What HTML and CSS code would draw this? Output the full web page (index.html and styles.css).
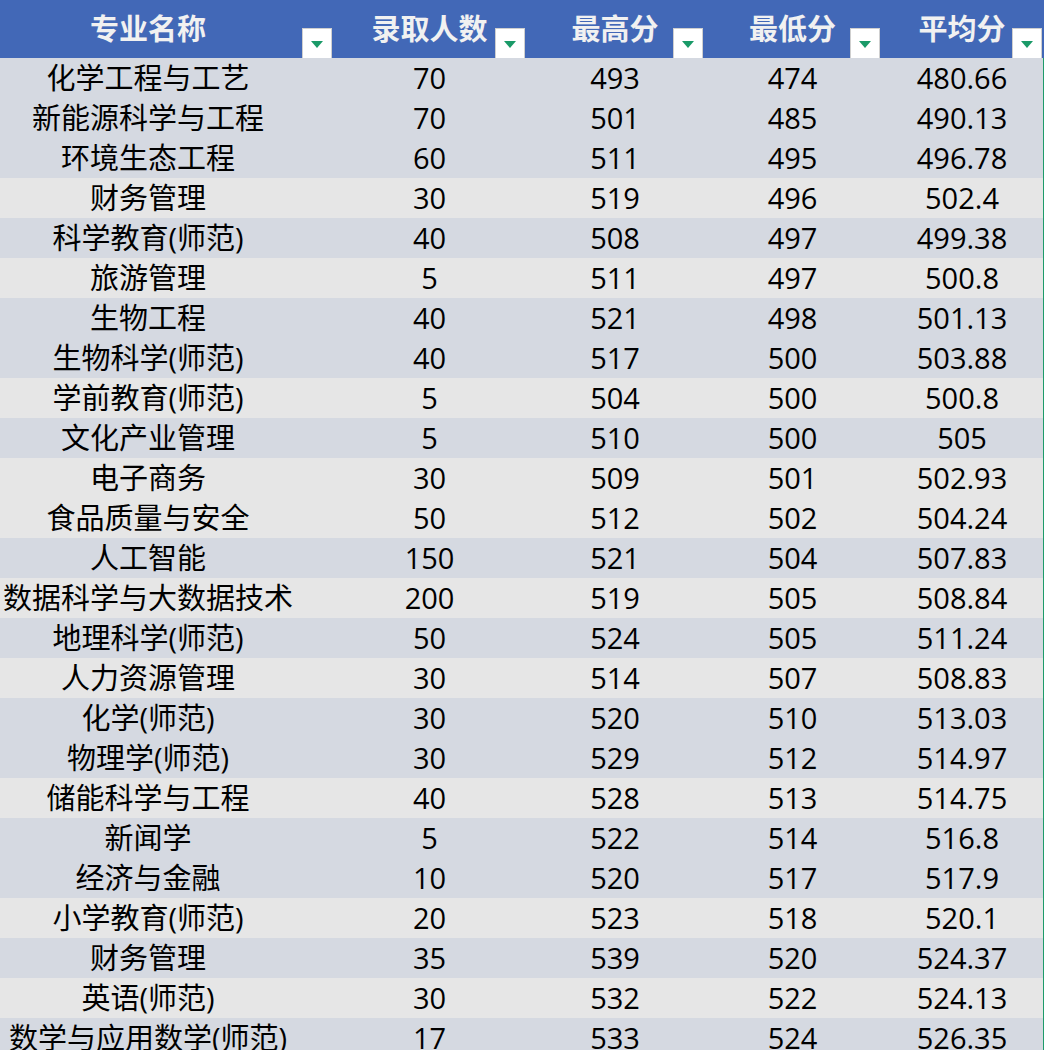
FILE: index.html
```html
<!DOCTYPE html>
<html lang="zh-CN">
<head>
<meta charset="utf-8">
<title>专业录取分数</title>
<link rel="stylesheet" href="styles.css">
</head>
<body>
<table class="sheet">
  <colgroup>
    <col class="c1"><col class="c2"><col class="c3"><col class="c4"><col class="c5">
  </colgroup>
  <thead>
    <tr class="head">
      <th class="name">专业名称<span class="filter"></span></th>
      <th>录取人数<span class="filter"></span></th>
      <th>最高分<span class="filter"></span></th>
      <th>最低分<span class="filter"></span></th>
      <th class="last">平均分<span class="filter"></span></th>
    </tr>
  </thead>
  <tbody>
    <tr class="d"><td class="name">化学工程与工艺</td><td>70</td><td>493</td><td>474</td><td class="last">480.66</td></tr>
    <tr class="d"><td class="name">新能源科学与工程</td><td>70</td><td>501</td><td>485</td><td class="last">490.13</td></tr>
    <tr class="d"><td class="name">环境生态工程</td><td>60</td><td>511</td><td>495</td><td class="last">496.78</td></tr>
    <tr class="l"><td class="name">财务管理</td><td>30</td><td>519</td><td>496</td><td class="last">502.4</td></tr>
    <tr class="d"><td class="name">科学教育(师范)</td><td>40</td><td>508</td><td>497</td><td class="last">499.38</td></tr>
    <tr class="l"><td class="name">旅游管理</td><td>5</td><td>511</td><td>497</td><td class="last">500.8</td></tr>
    <tr class="d"><td class="name">生物工程</td><td>40</td><td>521</td><td>498</td><td class="last">501.13</td></tr>
    <tr class="d"><td class="name">生物科学(师范)</td><td>40</td><td>517</td><td>500</td><td class="last">503.88</td></tr>
    <tr class="l"><td class="name">学前教育(师范)</td><td>5</td><td>504</td><td>500</td><td class="last">500.8</td></tr>
    <tr class="d"><td class="name">文化产业管理</td><td>5</td><td>510</td><td>500</td><td class="last">505</td></tr>
    <tr class="l"><td class="name">电子商务</td><td>30</td><td>509</td><td>501</td><td class="last">502.93</td></tr>
    <tr class="l"><td class="name">食品质量与安全</td><td>50</td><td>512</td><td>502</td><td class="last">504.24</td></tr>
    <tr class="d"><td class="name">人工智能</td><td>150</td><td>521</td><td>504</td><td class="last">507.83</td></tr>
    <tr class="l"><td class="name">数据科学与大数据技术</td><td>200</td><td>519</td><td>505</td><td class="last">508.84</td></tr>
    <tr class="d"><td class="name">地理科学(师范)</td><td>50</td><td>524</td><td>505</td><td class="last">511.24</td></tr>
    <tr class="l"><td class="name">人力资源管理</td><td>30</td><td>514</td><td>507</td><td class="last">508.83</td></tr>
    <tr class="d"><td class="name">化学(师范)</td><td>30</td><td>520</td><td>510</td><td class="last">513.03</td></tr>
    <tr class="d"><td class="name">物理学(师范)</td><td>30</td><td>529</td><td>512</td><td class="last">514.97</td></tr>
    <tr class="l"><td class="name">储能科学与工程</td><td>40</td><td>528</td><td>513</td><td class="last">514.75</td></tr>
    <tr class="d"><td class="name">新闻学</td><td>5</td><td>522</td><td>514</td><td class="last">516.8</td></tr>
    <tr class="d"><td class="name">经济与金融</td><td>10</td><td>520</td><td>517</td><td class="last">517.9</td></tr>
    <tr class="l"><td class="name">小学教育(师范)</td><td>20</td><td>523</td><td>518</td><td class="last">520.1</td></tr>
    <tr class="d"><td class="name">财务管理</td><td>35</td><td>539</td><td>520</td><td class="last">524.37</td></tr>
    <tr class="l"><td class="name">英语(师范)</td><td>30</td><td>532</td><td>522</td><td class="last">524.13</td></tr>
    <tr class="d"><td class="name">数学与应用数学(师范)</td><td>17</td><td>533</td><td>524</td><td class="last">526.35</td></tr>
  </tbody>
</table>
</body>
</html>
```

FILE: styles.css
```css
html, body {
  margin: 0;
  padding: 0;
  background: #ffffff;
  overflow: hidden;
}

.sheet {
  border-collapse: collapse;
  table-layout: fixed;
  width: 1044px;
  font-family: "Open Sans", "Noto Sans CJK SC", "Noto Sans", sans-serif;
  font-size: 29px;
  color: #000000;
}

.c1 { width: 333px; }
.c2 { width: 193px; }
.c3 { width: 178px; }
.c4 { width: 177px; }
.c5 { width: 163px; }

.sheet th,
.sheet td {
  padding: 0;
  text-align: center;
  white-space: nowrap;
  overflow: visible;
}

.sheet .name {
  padding-right: 37px;
}

.head th {
  position: relative;
  height: 58px;
  background: #4268b7;
  color: #f1f1f1;
  font-weight: 700;
  font-size: 29px;
  line-height: 58px;
  vertical-align: top;
}

.filter {
  position: absolute;
  right: 1px;
  bottom: 0;
  width: 28px;
  height: 29px;
  background: #ffffff;
  border: 1px solid #cfcfcf;
  border-bottom: none;
}

.filter::after {
  content: "";
  position: absolute;
  left: 8px;
  top: 12px;
  width: 0;
  height: 0;
  border-left: 6px solid transparent;
  border-right: 6px solid transparent;
  border-top: 7px solid #1a9a68;
}

.sheet td {
  height: 40px;
  line-height: 40px;
}

.d td { background: #d5d9e1; }
.l td { background: #e6e6e6; }

.sheet td.last {
  border-right: 2px solid #1e9b6a;
}

.head th.last {
  border-right: 2px solid #4268b7;
}
```
